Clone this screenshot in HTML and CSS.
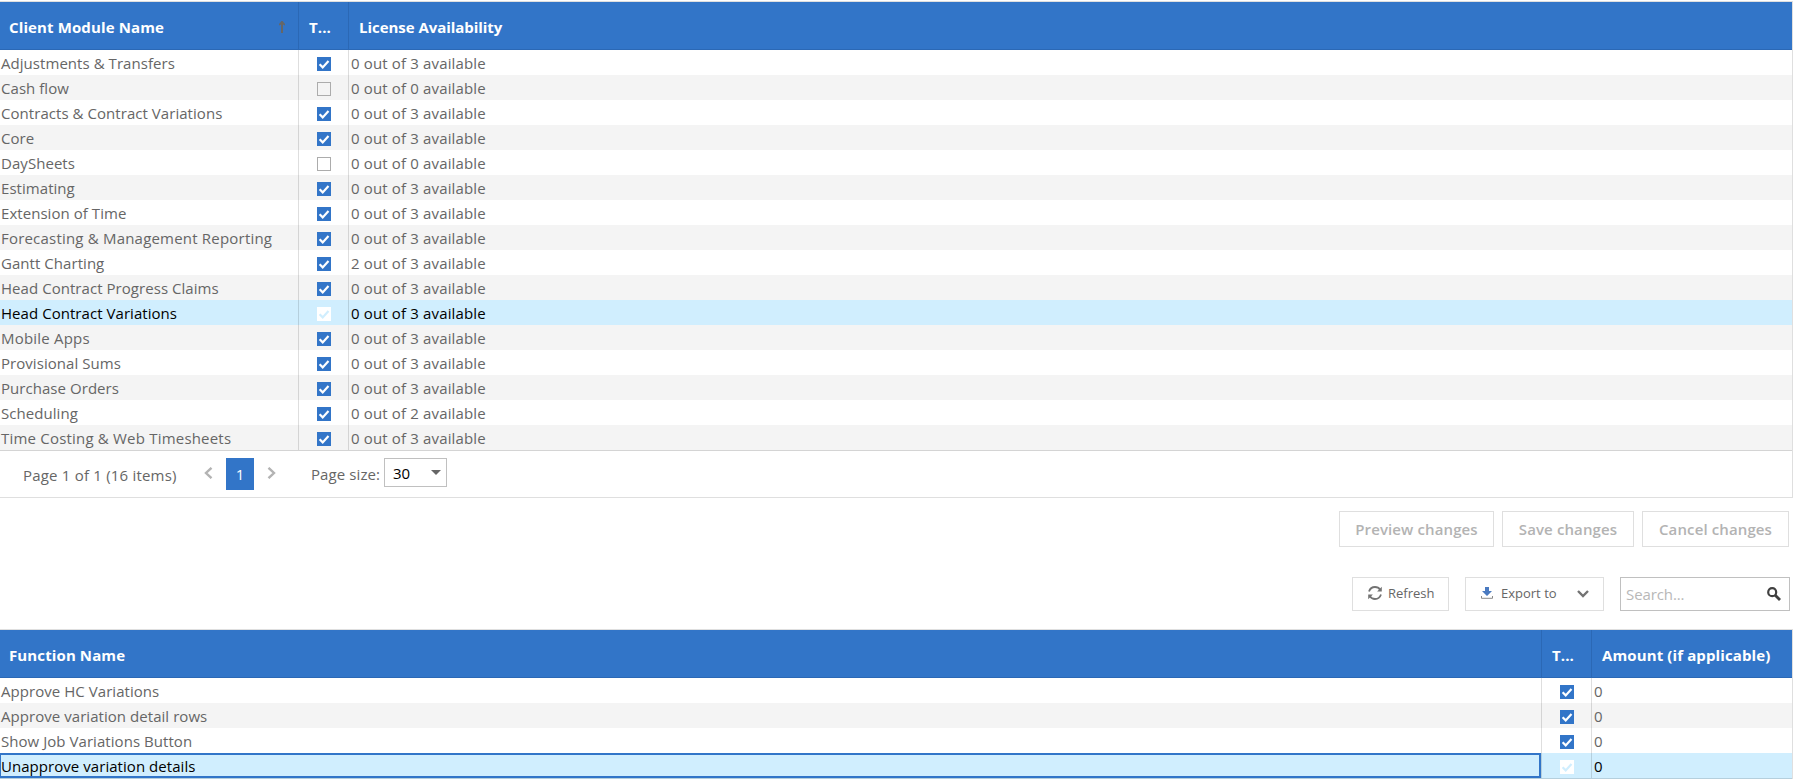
FILE: index.html
```html
<!DOCTYPE html>
<html lang="en">
<head>
    <meta charset="UTF-8">
    <title>Client Modules</title>
    <link rel="stylesheet" href="styles.css">
</head>
<body>
    <!-- Shared checkbox shapes -->
    <svg class="sprite">
        <symbol id="tick" viewBox="0 0 14 14">
            <rect width="14" height="14" fill="var(--box)"/>
            <path d="M2.6 7.3l3.1 3.1 5.8-6.3" fill="none" stroke="var(--mark)" stroke-width="2.2"/>
        </symbol>
        <symbol id="empty" viewBox="0 0 14 14">
            <rect x=".5" y=".5" width="13" height="13" fill="none" stroke="#acacac"/>
        </symbol>
    </svg>

    <!-- Client modules -->
    <div class="grid">
        <table class="modules">
            <colgroup><col class="col-module"><col class="col-tick"><col></colgroup>
            <thead>
                <tr>
                    <th><div class="head"><span>Client Module Name</span><svg class="sort" viewBox="0 0 6 12"><path d="M0 4.5V3L2.5 0h1L6 3v1.500L4 3.500V12H2V3.500z" fill="#666"/></svg></div></th>
                    <th>T...</th>
                    <th>License Availability</th>
                </tr>
            </thead>
            <tbody>
                <tr><td>Adjustments &amp; Transfers</td><td><svg class="check"><use href="#tick"/></svg></td><td>0 out of 3 available</td></tr>
                <tr><td>Cash flow</td><td><svg class="check"><use href="#empty"/></svg></td><td>0 out of 0 available</td></tr>
                <tr><td>Contracts &amp; Contract Variations</td><td><svg class="check"><use href="#tick"/></svg></td><td>0 out of 3 available</td></tr>
                <tr><td>Core</td><td><svg class="check"><use href="#tick"/></svg></td><td>0 out of 3 available</td></tr>
                <tr><td>DaySheets</td><td><svg class="check"><use href="#empty"/></svg></td><td>0 out of 0 available</td></tr>
                <tr><td>Estimating</td><td><svg class="check"><use href="#tick"/></svg></td><td>0 out of 3 available</td></tr>
                <tr><td>Extension of Time</td><td><svg class="check"><use href="#tick"/></svg></td><td>0 out of 3 available</td></tr>
                <tr><td class="wide">Forecasting &amp; Management Reporting</td><td><svg class="check"><use href="#tick"/></svg></td><td>0 out of 3 available</td></tr>
                <tr><td>Gantt Charting</td><td><svg class="check"><use href="#tick"/></svg></td><td>2 out of 3 available</td></tr>
                <tr><td>Head Contract Progress Claims</td><td><svg class="check"><use href="#tick"/></svg></td><td>0 out of 3 available</td></tr>
                <tr class="selected"><td>Head Contract Variations</td><td><svg class="check"><use href="#tick"/></svg></td><td>0 out of 3 available</td></tr>
                <tr><td class="wide">Mobile Apps</td><td><svg class="check"><use href="#tick"/></svg></td><td>0 out of 3 available</td></tr>
                <tr><td>Provisional Sums</td><td><svg class="check"><use href="#tick"/></svg></td><td>0 out of 3 available</td></tr>
                <tr><td>Purchase Orders</td><td><svg class="check"><use href="#tick"/></svg></td><td>0 out of 3 available</td></tr>
                <tr><td>Scheduling</td><td><svg class="check"><use href="#tick"/></svg></td><td>0 out of 2 available</td></tr>
                <tr><td class="wide">Time Costing &amp; Web Timesheets</td><td><svg class="check"><use href="#tick"/></svg></td><td>0 out of 3 available</td></tr>
            </tbody>
        </table>
        <div class="pager">
            <span class="summary">Page 1 of 1 (16 items)</span>
            <svg class="arrow" viewBox="0 0 9 12"><path d="M7.500 .8L2 6l5.500 5.200" fill="none" stroke="#b3b3b3" stroke-width="2.400"/></svg>
            <span class="page">1</span>
            <svg class="arrow" viewBox="0 0 9 12"><path d="M1.500 .8L7 6l-5.500 5.200" fill="none" stroke="#b3b3b3" stroke-width="2.400"/></svg>
            <span class="size-label">Page size:</span>
            <div class="size"><span>30</span><svg width="10" height="5"><path d="M0 0h10L5 5z" fill="#666"/></svg></div>
        </div>
    </div>

    <div class="actions">
        <button class="btn preview" disabled>Preview changes</button>
        <button class="btn save" disabled>Save changes</button>
        <button class="btn cancel" disabled>Cancel changes</button>
    </div>

    <div class="toolbar">
        <div class="tool refresh">
            <svg width="16" height="14" viewBox="0 0 16 14" fill="none" stroke="#737373" stroke-width="1.800"><path d="M2 5.500C3 2.600 5.300 1 8 1c2.300 0 4 .9 5.200 2.700M14 8.500C13 11.400 10.700 13 8 13c-2.300 0-4-.9-5.200-2.700"/><path d="M14.800 .8v4.700h-4.700zM1.200 13.200V8.500h4.700z" fill="#737373" stroke="none"/></svg>
            <span>Refresh</span>
        </div>
        <div class="tool export">
            <svg width="12" height="12" viewBox="0 0 12 12"><path d="M4 0h4v4h3L6 9 1 4h3z" fill="#4a7ac0"/><path d="M.5 9v2.300h11V9" fill="none" stroke="#8a8a8a"/></svg>
            <span>Export to</span>
            <svg class="caret" width="12" height="8" viewBox="0 0 12 8"><path d="M1 1l5 5 5-5" fill="none" stroke="#737373" stroke-width="2.400"/></svg>
        </div>
        <div class="search">
            <span>Search...</span>
            <svg width="14" height="14" viewBox="0 0 14 14" fill="none" stroke="#404040"><circle cx="5.200" cy="5.200" r="4" stroke-width="2.200"/><path d="M8 8l5 5" stroke-width="2.800"/></svg>
        </div>
    </div>

    <!-- Functions of the selected module -->
    <div class="grid">
        <table class="functions">
            <colgroup><col class="col-function"><col class="col-tick"><col></colgroup>
            <thead>
                <tr>
                    <th>Function Name</th>
                    <th>T...</th>
                    <th>Amount (if applicable)</th>
                </tr>
            </thead>
            <tbody>
                <tr><td>Approve HC Variations</td><td><svg class="check"><use href="#tick"/></svg></td><td>0</td></tr>
                <tr><td>Approve variation detail rows</td><td><svg class="check"><use href="#tick"/></svg></td><td>0</td></tr>
                <tr><td>Show Job Variations Button</td><td><svg class="check"><use href="#tick"/></svg></td><td>0</td></tr>
                <tr class="selected"><td class="focused">Unapprove variation details</td><td><svg class="check"><use href="#tick"/></svg></td><td>0</td></tr>
            </tbody>
        </table>
    </div>
</body>
</html>
```
FILE: styles.css
```css
* {
    box-sizing: border-box;
}

body {
    margin: 0;
    padding-top: 1px;
    background-color: #fff;
    color: #666;
    font-family: "Segoe UI", "Open Sans", "Noto Sans", sans-serif;
    font-size: 15px;
    overflow: hidden;
}

.sprite {
    display: none;
}

/* Grids */
.grid {
    width: 1793px;
    border-top: 1px solid #dfdfdf;
    border-right: 1px solid #dfdfdf;
}

table {
    width: 100%;
    table-layout: fixed;
    border-collapse: separate;
    border-spacing: 0;
}

.col-module {
    width: 299px;
}

.col-function {
    width: 1542px;
}

.col-tick {
    width: 50px;
}

th {
    height: 48px;
    padding: 3px 9px 0 10px;
    background-color: #3275c8;
    border-right: 1px solid #2b68b5;
    border-bottom: 1px solid #2b68b5;
    color: #fff;
    font-weight: 700;
    letter-spacing: 0.12px;
    line-height: 24px;
    text-align: left;
    white-space: nowrap;
}

th:first-child {
    padding-left: 9px;
}

th:last-child {
    border-right: none;
}

.modules th:last-child {
    letter-spacing: -0.04px;
}

.head {
    display: flex;
    align-items: center;
    justify-content: space-between;
}

.sort {
    width: 6px;
    height: 12px;
    margin-right: 4px;
}

td {
    height: 25px;
    padding: 1px 2px 0;
    border-right: 1px solid rgba(0, 0, 0, 0.13);
    letter-spacing: 0.15px;
    line-height: 24px;
    white-space: nowrap;
}

td:first-child {
    padding-left: 1px;
    letter-spacing: 0.05px;
}

td.wide:first-child {
    letter-spacing: 0.2px;
}

td:last-child {
    border-right: none;
}

td:nth-child(2) {
    padding: 7px 0 0 18px;
    vertical-align: top;
}

tbody tr:nth-child(even) {
    background-color: #f4f4f4;
}

tbody tr.selected {
    background-color: #d0eefe;
    color: #000;
}

tbody tr:last-child td {
    height: 26px;
    border-bottom: 1px solid rgba(0, 0, 0, 0.13);
}

td.focused {
    box-shadow: inset 0 2px #3275c8, inset 0 -2px #3275c8, inset -2px 0 #3275c8, inset 1px 0 #3275c8;
}

.check {
    --box: #3275c8;
    --mark: #fff;
    display: block;
    width: 14px;
    height: 14px;
}

.selected .check {
    --box: #fff;
    --mark: #d0eefe;
}

/* Pager */
.pager {
    display: flex;
    align-items: flex-start;
    height: 47px;
    padding: 7px 0 0 23px;
    border-bottom: 1px solid #dfdfdf;
    line-height: 32px;
    white-space: nowrap;
}

.summary {
    width: 181px;
    padding-top: 1px;
    letter-spacing: 0.2px;
}

.arrow {
    width: 9px;
    height: 12px;
    margin-top: 9px;
}

.page {
    width: 28px;
    height: 32px;
    margin: 0 13px;
    background-color: #3275c8;
    color: #fff;
    text-align: center;
}

.size-label {
    width: 73px;
    margin-left: 35px;
    letter-spacing: 0.1px;
}

.size {
    display: flex;
    align-items: center;
    justify-content: space-between;
    width: 63px;
    height: 29px;
    padding: 0 5px 0 8px;
    border: 1px solid #c0c0c0;
    color: #000;
}

/* Buttons */
.actions {
    display: flex;
    justify-content: flex-end;
    gap: 8px;
    padding: 13px 5px 0 0;
}

.btn {
    height: 36px;
    padding: 0;
    background-color: #fff;
    border: 1px solid #dfdfdf;
    color: #b3b3b3;
    font-family: inherit;
    font-size: 15px;
    font-weight: 600;
    letter-spacing: 0.12px;
    white-space: nowrap;
}

.preview {
    width: 155px;
}

.save {
    width: 132px;
}

.cancel {
    width: 147px;
}

.toolbar {
    display: flex;
    justify-content: flex-end;
    gap: 16px;
    padding: 30px 4px 18px 0;
}

.tool {
    display: flex;
    align-items: center;
    height: 34px;
    padding: 0 14px 2px 15px;
    border: 1px solid #dfdfdf;
    font-size: 13px;
    white-space: nowrap;
}

.tool svg {
    flex-shrink: 0;
}

.refresh {
    width: 97px;
    padding-left: 14px;
    gap: 5px;
}

.export {
    width: 139px;
    gap: 8px;
}

.caret {
    margin: 2px 0 0 auto;
}

.search {
    display: flex;
    align-items: center;
    justify-content: space-between;
    width: 170px;
    height: 34px;
    padding: 0 8px 0 5px;
    border: 1px solid #c0c0c0;
    color: #b8b8b8;
    letter-spacing: -0.1px;
}
```
